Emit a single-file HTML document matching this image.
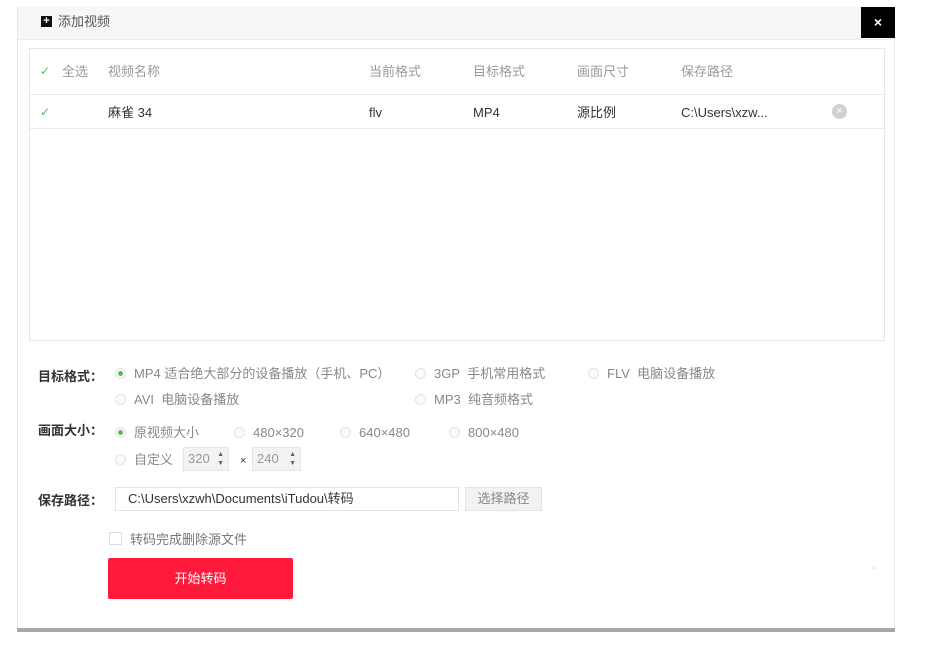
<!DOCTYPE html>
<html><head><meta charset="utf-8"><style>
*{margin:0;padding:0;box-sizing:border-box}
body{width:927px;height:648px;background:#fff;position:relative;overflow:hidden;font-family:"Liberation Sans","Noto Sans CJK SC",sans-serif;font-size:13px;color:#333}
.a{position:absolute;white-space:nowrap;line-height:17px}
.g{color:#999}
.chk{position:absolute;width:12px;height:14px;color:#5cb85c;font-size:12px;line-height:14px;font-weight:bold;font-family:"DejaVu Sans",sans-serif}
.rd{position:absolute;width:11px;height:11px;border:1px solid #e3e3e3;border-radius:50%;background:#fafafa}
.rd.on::after{content:"";position:absolute;left:2px;top:2px;width:5px;height:5px;border-radius:50%;background:#5cb85c}
.lbl{position:absolute;font-size:13px;line-height:17px;color:#333;font-weight:bold;white-space:nowrap}
.opt{position:absolute;color:#888;font-size:13px;line-height:17px;white-space:nowrap}
.spin{position:absolute;height:24px;border:1px solid #e5e5e5;background:#f3f3f3;color:#999;font-size:13px;line-height:22px;padding-left:4px}
.spin span{position:absolute;right:4px;top:2px;font-size:7px;line-height:9px;color:#666}
</style></head><body>
<div class="a" style="left:17px;top:7px;width:878px;height:623px;border-left:1px solid #e6e6e6;border-right:1px solid #eee"></div>
<div class="a" style="left:18px;top:7px;width:877px;height:33px;background:#f6f7f9;border-bottom:1px solid #ebedf0"></div>
<div class="a" style="left:41px;top:16px;width:11px;height:11px;background:#111;color:#fff;font-size:11px;line-height:11px;text-align:center;font-weight:bold">+</div>
<div class="a" style="left:58px;top:13px;font-size:13px;color:#555">添加视频</div>
<div class="a" style="left:861px;top:7px;width:34px;height:31px;background:#000;color:#fff;font-weight:bold;font-size:14px;line-height:31px;text-align:center">×</div>

<div class="a" style="left:29px;top:48px;width:856px;height:293px;border:1px solid #e6e6e6"></div>
<div class="a" style="left:30px;top:94px;width:854px;height:1px;background:#eaeaea"></div>
<div class="a" style="left:30px;top:128px;width:854px;height:1px;background:#eaeaea"></div>
<div class="chk" style="left:40px;top:64px">✓</div>
<div class="a g" style="left:62px;top:63px">全选</div>
<div class="a g" style="left:108px;top:63px">视频名称</div>
<div class="a g" style="left:369px;top:63px">当前格式</div>
<div class="a g" style="left:473px;top:63px">目标格式</div>
<div class="a g" style="left:577px;top:63px">画面尺寸</div>
<div class="a g" style="left:681px;top:63px">保存路径</div>
<div class="chk" style="left:40px;top:105px">✓</div>
<div class="a" style="left:108px;top:104px">麻雀 34</div>
<div class="a" style="left:369px;top:104px">flv</div>
<div class="a" style="left:473px;top:104px">MP4</div>
<div class="a" style="left:577px;top:104px">源比例</div>
<div class="a" style="left:681px;top:104px">C:\Users\xzw...</div>
<div class="a" style="left:832px;top:104px;width:15px;height:15px;border-radius:50%;background:#d0d0d0;color:#fff;font-size:11px;line-height:15px;text-align:center">×</div>

<div class="lbl" style="left:38px;top:368px">目标格式：</div>
<div class="rd on" style="left:115px;top:368px"></div><div class="opt" style="left:134px;top:365px">MP4 适合绝大部分的设备播放（手机、PC）</div>
<div class="rd" style="left:415px;top:368px"></div><div class="opt" style="left:434px;top:365px">3GP&nbsp; 手机常用格式</div>
<div class="rd" style="left:588px;top:368px"></div><div class="opt" style="left:607px;top:365px">FLV&nbsp; 电脑设备播放</div>
<div class="rd" style="left:115px;top:394px"></div><div class="opt" style="left:134px;top:391px">AVI&nbsp; 电脑设备播放</div>
<div class="rd" style="left:415px;top:394px"></div><div class="opt" style="left:434px;top:391px">MP3&nbsp; 纯音频格式</div>

<div class="lbl" style="left:38px;top:422px">画面大小：</div>
<div class="rd on" style="left:115px;top:427px"></div><div class="opt" style="left:134px;top:424px">原视频大小</div>
<div class="rd" style="left:234px;top:427px"></div><div class="opt" style="left:253px;top:424px">480×320</div>
<div class="rd" style="left:340px;top:427px"></div><div class="opt" style="left:359px;top:424px">640×480</div>
<div class="rd" style="left:449px;top:427px"></div><div class="opt" style="left:468px;top:424px">800×480</div>
<div class="rd" style="left:115px;top:454px"></div><div class="opt" style="left:134px;top:451px">自定义</div>
<div class="spin" style="left:183px;top:447px;width:46px">320<span>▲<br>▼</span></div>
<div class="a" style="left:240px;top:456px;font-size:11px;line-height:11px;color:#333">×</div>
<div class="spin" style="left:252px;top:447px;width:49px">240<span>▲<br>▼</span></div>

<div class="lbl" style="left:38px;top:492px">保存路径：</div>
<div class="a" style="left:115px;top:487px;width:344px;height:24px;border:1px solid #e3e3e3;padding-left:12px;line-height:22px;color:#333">C:\Users\xzwh\Documents\iTudou\转码</div>
<div class="a" style="left:465px;top:487px;width:77px;height:24px;border:1px solid #e3e3e3;background:#f2f2f2;color:#888;line-height:22px;text-align:center">选择路径</div>

<div class="a" style="left:109px;top:532px;width:13px;height:13px;border:1px solid #ddd"></div>
<div class="a" style="left:130px;top:531px;color:#777">转码完成删除源文件</div>
<div class="a" style="left:108px;top:558px;width:185px;height:41px;background:#ff1a3c;color:#fff;text-align:center;line-height:41px;font-size:13px;border-radius:2px">开始转码</div>
<div class="a" style="left:871px;top:559px;font-size:8px;color:#ccc">‹‹</div>

<div class="a" style="left:17px;top:628px;width:878px;height:4px;background:#a8a8a8"></div>
</body></html>
